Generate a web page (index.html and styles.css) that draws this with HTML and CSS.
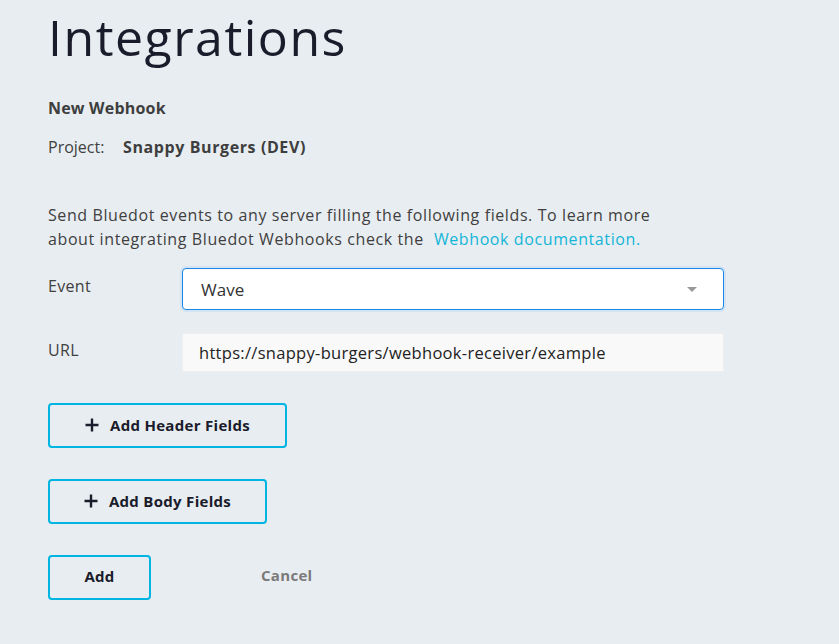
FILE: index.html
```html
<!DOCTYPE html>
<html>
<head>
<meta charset="utf-8">
<link rel="stylesheet" href="styles.css">
</head>
<body>
<div class="page">
  <h1 class="title">Integrations</h1>
  <div class="subtitle">New Webhook</div>
  <div class="project"><span class="project-label">Project:</span><span class="project-name">Snappy Burgers (DEV)</span></div>
  <div class="desc">
    <div class="desc-line">Send Bluedot events to any server filling the following fields. To learn more</div>
    <div class="desc-line desc-line-2"><span>about integrating Bluedot Webhooks check the</span><a class="link" href="#">Webhook documentation.</a></div>
  </div>
  <div class="field-row">
    <label class="field-label">Event</label>
    <div class="select">
      <span class="select-value">Wave</span>
      <span class="caret"></span>
    </div>
  </div>
  <div class="field-row field-row-url">
    <label class="field-label">URL</label>
    <div class="input">https://snappy-burgers/webhook-receiver/example</div>
  </div>
  <div class="btn-row"><button class="btn btn-header"><svg class="plus" width="14" height="14" viewBox="0 0 14 14"><path d="M7 0.5V13.5M0.5 7H13.5" stroke="#1a1b2b" stroke-width="2.4" fill="none"/></svg>Add Header Fields</button></div>
  <div class="btn-row"><button class="btn btn-body"><svg class="plus" width="14" height="14" viewBox="0 0 14 14"><path d="M7 0.5V13.5M0.5 7H13.5" stroke="#1a1b2b" stroke-width="2.4" fill="none"/></svg>Add Body Fields</button></div>
  <div class="actions">
    <button class="btn btn-add">Add</button>
    <button class="cancel">Cancel</button>
  </div>
</div>
</body>
</html>
```
FILE: styles.css
```css
html, body {
  margin: 0;
  padding: 0;
  background: #e8edf1;
}
body {
  font-family: "Open Sans", "Liberation Sans", sans-serif;
  color: #404040;
}
.page {
  padding: 0 0 0 48px;
}
.title {
  margin: 0;
  padding-top: 7px;
  font-weight: 400;
  font-size: 50px;
  line-height: 60px;
  color: #1a1b2b;
  letter-spacing: 1.5px;
}
.subtitle {
  margin-top: 29px;
  font-weight: 700;
  font-size: 16px;
  line-height: 24px;
  color: #3e3e3e;
  letter-spacing: 0.2px;
}
.project {
  margin-top: 15px;
  font-size: 16px;
  line-height: 24px;
}
.project-label {
  display: inline-block;
  width: 75px;
}
.project-name {
  font-weight: 700;
  color: #3e3e3e;
  letter-spacing: 0.6px;
}
.desc {
  margin-top: 44px;
  font-size: 16px;
  line-height: 24px;
  letter-spacing: 0.6px;
}
.desc-line-2 {
  display: flex;
  gap: 10px;
}
.link {
  color: #13b5d8;
  text-decoration: none;
}
.field-row {
  display: flex;
  align-items: center;
  margin-top: 17px;
}
.field-row-url {
  margin-top: 23px;
}
.field-label {
  width: 134px;
  font-size: 16px;
  position: relative;
  top: -3px;
  letter-spacing: 0.3px;
}
.select {
  box-sizing: border-box;
  width: 542px;
  height: 42px;
  background: #fff;
  border: 1px solid #1b86e6;
  border-radius: 4px;
  box-shadow: 0 0 0 2px #d3e5f4;
  display: flex;
  align-items: center;
  justify-content: space-between;
  padding: 0 26px 0 18px;
  font-size: 17px;
  color: #333;
}
.caret {
  width: 0;
  height: 0;
  border-left: 5px solid transparent;
  border-right: 5px solid transparent;
  border-top: 5px solid #999;
}
.input {
  box-sizing: border-box;
  width: 542px;
  height: 39px;
  background: #f9f9f9;
  border: 1px solid #eeeeee;
  display: flex;
  align-items: center;
  padding: 0 16px;
  font-size: 16.5px;
  color: #222;
  letter-spacing: 0.3px;
}
.btn-row {
  margin-top: 31px;
}
.btn {
  box-sizing: border-box;
  height: 45px;
  border: 2px solid #00b5e2;
  border-radius: 4px;
  background: transparent;
  font-family: inherit;
  font-weight: 700;
  font-size: 15px;
  color: #1a1b2b;
  cursor: pointer;
  display: inline-flex;
  align-items: center;
  justify-content: center;
  letter-spacing: 0.3px;
  padding: 0 0 2px 0;
}
.btn-header {
  width: 239px;
}
.btn-body {
  width: 219px;
}
.plus {
  margin-right: 11px;
  position: relative;
  top: 0;
}
.actions {
  margin-top: 31px;
  display: flex;
  align-items: center;
}
.btn-add {
  width: 103px;
  padding-bottom: 4px;
}
.cancel {
  margin-left: 110px;
  border: none;
  background: none;
  font-family: inherit;
  font-weight: 700;
  font-size: 15px;
  color: #7a7a7a;
  padding: 0 0 5px 0;
  letter-spacing: 0.3px;
}
```
